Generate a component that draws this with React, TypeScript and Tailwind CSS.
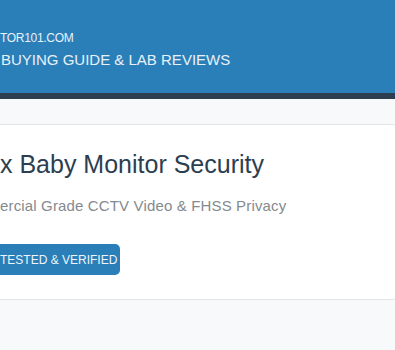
export default function App() {
  return (
    <div className="w-[395px] h-[350px] overflow-hidden bg-[#f8f9fa] font-['Liberation_Sans',Arial,sans-serif]">
      <header className="bg-[#2a7fb8] border-b-[6px] border-[#2c3e50] pt-[30px] pb-[23px] text-[#e8f1f8] whitespace-nowrap">
        <p className="text-[12px] leading-[16px] tracking-[-0.3px]">TOR101.COM</p>
        <p className="mt-[4px] ml-[1px] text-[15px] leading-[20px]">
          BUYING GUIDE &amp; LAB REVIEWS
        </p>
      </header>

      <main className="pt-[25px]">
        <section className="bg-white border-y border-[#e4e6e9] pt-[24px] pb-[24px] whitespace-nowrap">
          <h1 className="text-[25px] leading-[30px] text-[#2c3e50]">
            x Baby Monitor Security
          </h1>
          <p className="mt-[17px] text-[15px] leading-[20px] tracking-[0.15px] text-[#858a8e]">
            ercial Grade CCTV Video &amp; FHSS Privacy
          </p>
          <div className="mt-[28px] flex">
            <span className="flex items-center h-[31px] w-[120px] rounded-r-[5px] bg-[#2a7fb8] text-[12px] text-[#eef5fb]">
              <span>TESTED &amp; VERIFIED</span>
            </span>
          </div>
        </section>
      </main>
    </div>
  );
}
